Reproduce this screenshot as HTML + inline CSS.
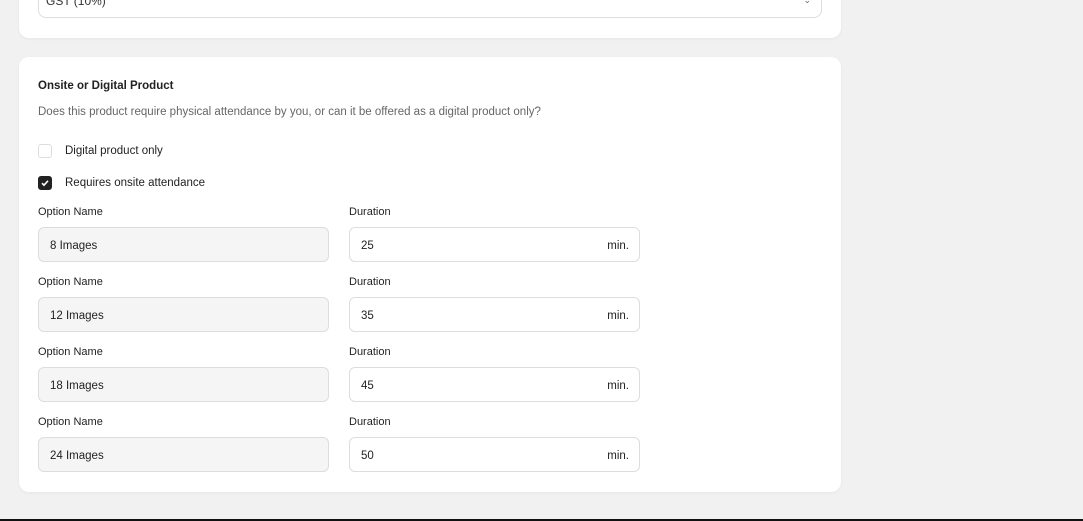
<!DOCTYPE html>
<html><head><style>
*{box-sizing:border-box;margin:0;padding:0}
body{width:1083px;height:521px;background:#f1f1f1;font-family:"Liberation Sans",sans-serif;position:relative;overflow:hidden;color:#222}
.card{position:absolute;left:19px;width:822px;background:#fff;border-radius:10px;box-shadow:0 1px 3px rgba(0,0,0,.05)}
.abs{position:absolute;white-space:nowrap}
.t{font-size:11px;color:#222;line-height:13px}
.in{position:absolute;height:35px;width:291px;border:1px solid #ddd;border-radius:6px;font-size:11.5px;padding:11px 11px;color:#222;line-height:14px}
.g{background:#f5f5f5}
.min{position:absolute;right:10px;top:11px}
.cb{position:absolute;left:38px;width:14px;height:14px;border-radius:3px;border:1px solid #ddd}
</style></head><body>
<div class="card" style="top:-20px;height:58px"></div>
<div class="abs" style="left:38px;top:-20px;width:784px;height:38px;border:1px solid #ddd;border-radius:8px;font-size:12px;color:#333"><span style="position:absolute;left:7px;top:13px">GST (10%)</span><span style="position:absolute;right:10px;top:14px;font-size:9px;color:#666">⌄</span></div>
<div class="card" style="top:57px;height:435px"></div>
<div class="abs" style="left:38px;top:79px;font-size:11.5px;font-weight:bold;color:#222;line-height:14px">Onsite or Digital Product</div>
<div class="abs" style="left:38px;top:105px;font-size:11.5px;color:#666;line-height:14px">Does this product require physical attendance by you, or can it be offered as a digital product only?</div>
<div class="cb" style="top:144px"></div>
<div class="abs" style="left:65px;top:144px;font-size:11.5px;line-height:14px">Digital product only</div>
<div class="cb" style="top:176px;background:#222;border-color:#222"><svg width="12" height="12" viewBox="0 0 12 12" style="position:absolute;left:0;top:0"><path d="M3 6.2l2 2 4-4.4" stroke="#fff" stroke-width="1.6" fill="none"/></svg></div>
<div class="abs" style="left:65px;top:176px;font-size:11.5px;line-height:14px">Requires onsite attendance</div>
<div class="abs t" style="left:38px;top:206px">Option Name</div><div class="abs t" style="left:349px;top:206px">Duration</div>
<div class="in g" style="left:38px;top:227px">8 Images</div><div class="in" style="left:349px;top:227px">25<span class="min">min.</span></div>
<div class="abs t" style="left:38px;top:276px">Option Name</div><div class="abs t" style="left:349px;top:276px">Duration</div>
<div class="in g" style="left:38px;top:297px">12 Images</div><div class="in" style="left:349px;top:297px">35<span class="min">min.</span></div>
<div class="abs t" style="left:38px;top:346px">Option Name</div><div class="abs t" style="left:349px;top:346px">Duration</div>
<div class="in g" style="left:38px;top:367px">18 Images</div><div class="in" style="left:349px;top:367px">45<span class="min">min.</span></div>
<div class="abs t" style="left:38px;top:416px">Option Name</div><div class="abs t" style="left:349px;top:416px">Duration</div>
<div class="in g" style="left:38px;top:437px">24 Images</div><div class="in" style="left:349px;top:437px">50<span class="min">min.</span></div>
<div style="position:absolute;left:0;top:519px;width:1083px;height:2px;background:#111"></div>
</body></html>
